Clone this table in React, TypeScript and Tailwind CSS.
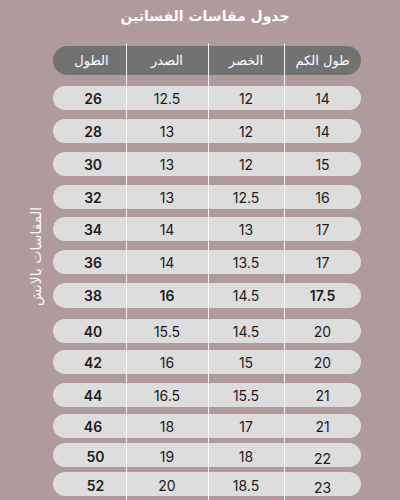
import React from "react";

const rows = [
  { len: "26", chest: "12.5", waist: "12", sleeve: "14", mt: "mt-[11px]" },
  { len: "28", chest: "13", waist: "12", sleeve: "14", mt: "mt-[9px]" },
  { len: "30", chest: "13", waist: "12", sleeve: "15", mt: "mt-[9px]" },
  { len: "32", chest: "13", waist: "12.5", sleeve: "16", mt: "mt-[9px]" },
  { len: "34", chest: "14", waist: "13", sleeve: "17", mt: "mt-[8px]" },
  { len: "36", chest: "14", waist: "13.5", sleeve: "17", mt: "mt-[9px]" },
  { len: "38", chest: "16", waist: "14.5", sleeve: "17.5", mt: "mt-[9px]", bold: true },
  { len: "40", chest: "15.5", waist: "14.5", sleeve: "20", mt: "mt-[11px]" },
  { len: "42", chest: "16", waist: "15", sleeve: "20", mt: "mt-[7px]" },
  { len: "44", chest: "16.5", waist: "15.5", sleeve: "21", mt: "mt-[9px]" },
  { len: "46", chest: "18", waist: "17", sleeve: "21", mt: "mt-[7px]" },
  { len: "50", chest: "19", waist: "18", sleeve: "22", mt: "mt-[5px]", low: true },
  { len: "52", chest: "20", waist: "18.5", sleeve: "23", mt: "mt-[5px]", low: true },
];

const arabic = { fontFamily: '"DejaVu Sans", sans-serif' };
const nums = { fontFamily: 'Inter, "Open Sans", sans-serif' };

export default function App() {
  return (
    <div className="w-[400px] h-[500px] overflow-hidden bg-[#af9a9c] flex flex-col">
      {/* Title */}
      <div className="h-[43px] pt-[5px] flex justify-center">
        <h1 dir="rtl" className="text-white text-[14px] font-bold leading-[22px] pl-[10px]" style={arabic}>
          جدول مقاسات الفساتين
        </h1>
      </div>

      <div className="flex flex-1">
        {/* Side label */}
        <div className="w-[53px] flex items-center justify-center pb-[30px] pl-[20px]">
          <span dir="rtl" className="-rotate-90 whitespace-nowrap text-white/95 text-[14px]" style={arabic}>
            المقاسات بالانش
          </span>
        </div>

        {/* Table */}
        <div className="relative w-[308px] pt-[3px]">
          <div className="h-[29px] rounded-full bg-[#737272] grid grid-cols-[73px_82px_76px_77px] items-center text-white text-[13px]" style={arabic}>
            <span dir="rtl" className="text-center pl-[4px]">الطول</span>
            <span dir="rtl" className="text-center">الصدر</span>
            <span dir="rtl" className="text-center">الخصر</span>
            <span dir="rtl" className="text-center">طول الكم</span>
          </div>

          {rows.map((r) => (
            <div
              key={r.len}
              className={`${r.mt} ${r.bold ? "h-[25px]" : "h-[24px]"} rounded-full bg-[#dedddd] grid grid-cols-[73px_82px_76px_77px] items-center text-[#1c1c1c] text-[14px]`}
              style={nums}
            >
              <span className={`text-center font-semibold pl-[7px] ${r.low ? "pl-[12px]" : ""}`}>{r.len}</span>
              <span className={`text-center ${r.bold ? "font-semibold" : ""}`}>{r.chest}</span>
              <span className="text-center">{r.waist}</span>
              <span className={`text-center ${r.bold ? "font-semibold" : ""} ${r.low ? "pt-[5px]" : ""}`}>{r.sleeve}</span>
            </div>
          ))}

          {/* column dividers */}
          <div className="absolute top-0 bottom-0 left-[73px] w-px bg-white/90" />
          <div className="absolute top-0 bottom-0 left-[155px] w-px bg-white/90" />
          <div className="absolute top-0 bottom-0 left-[231px] w-px bg-white/90" />
        </div>
      </div>
    </div>
  );
}
